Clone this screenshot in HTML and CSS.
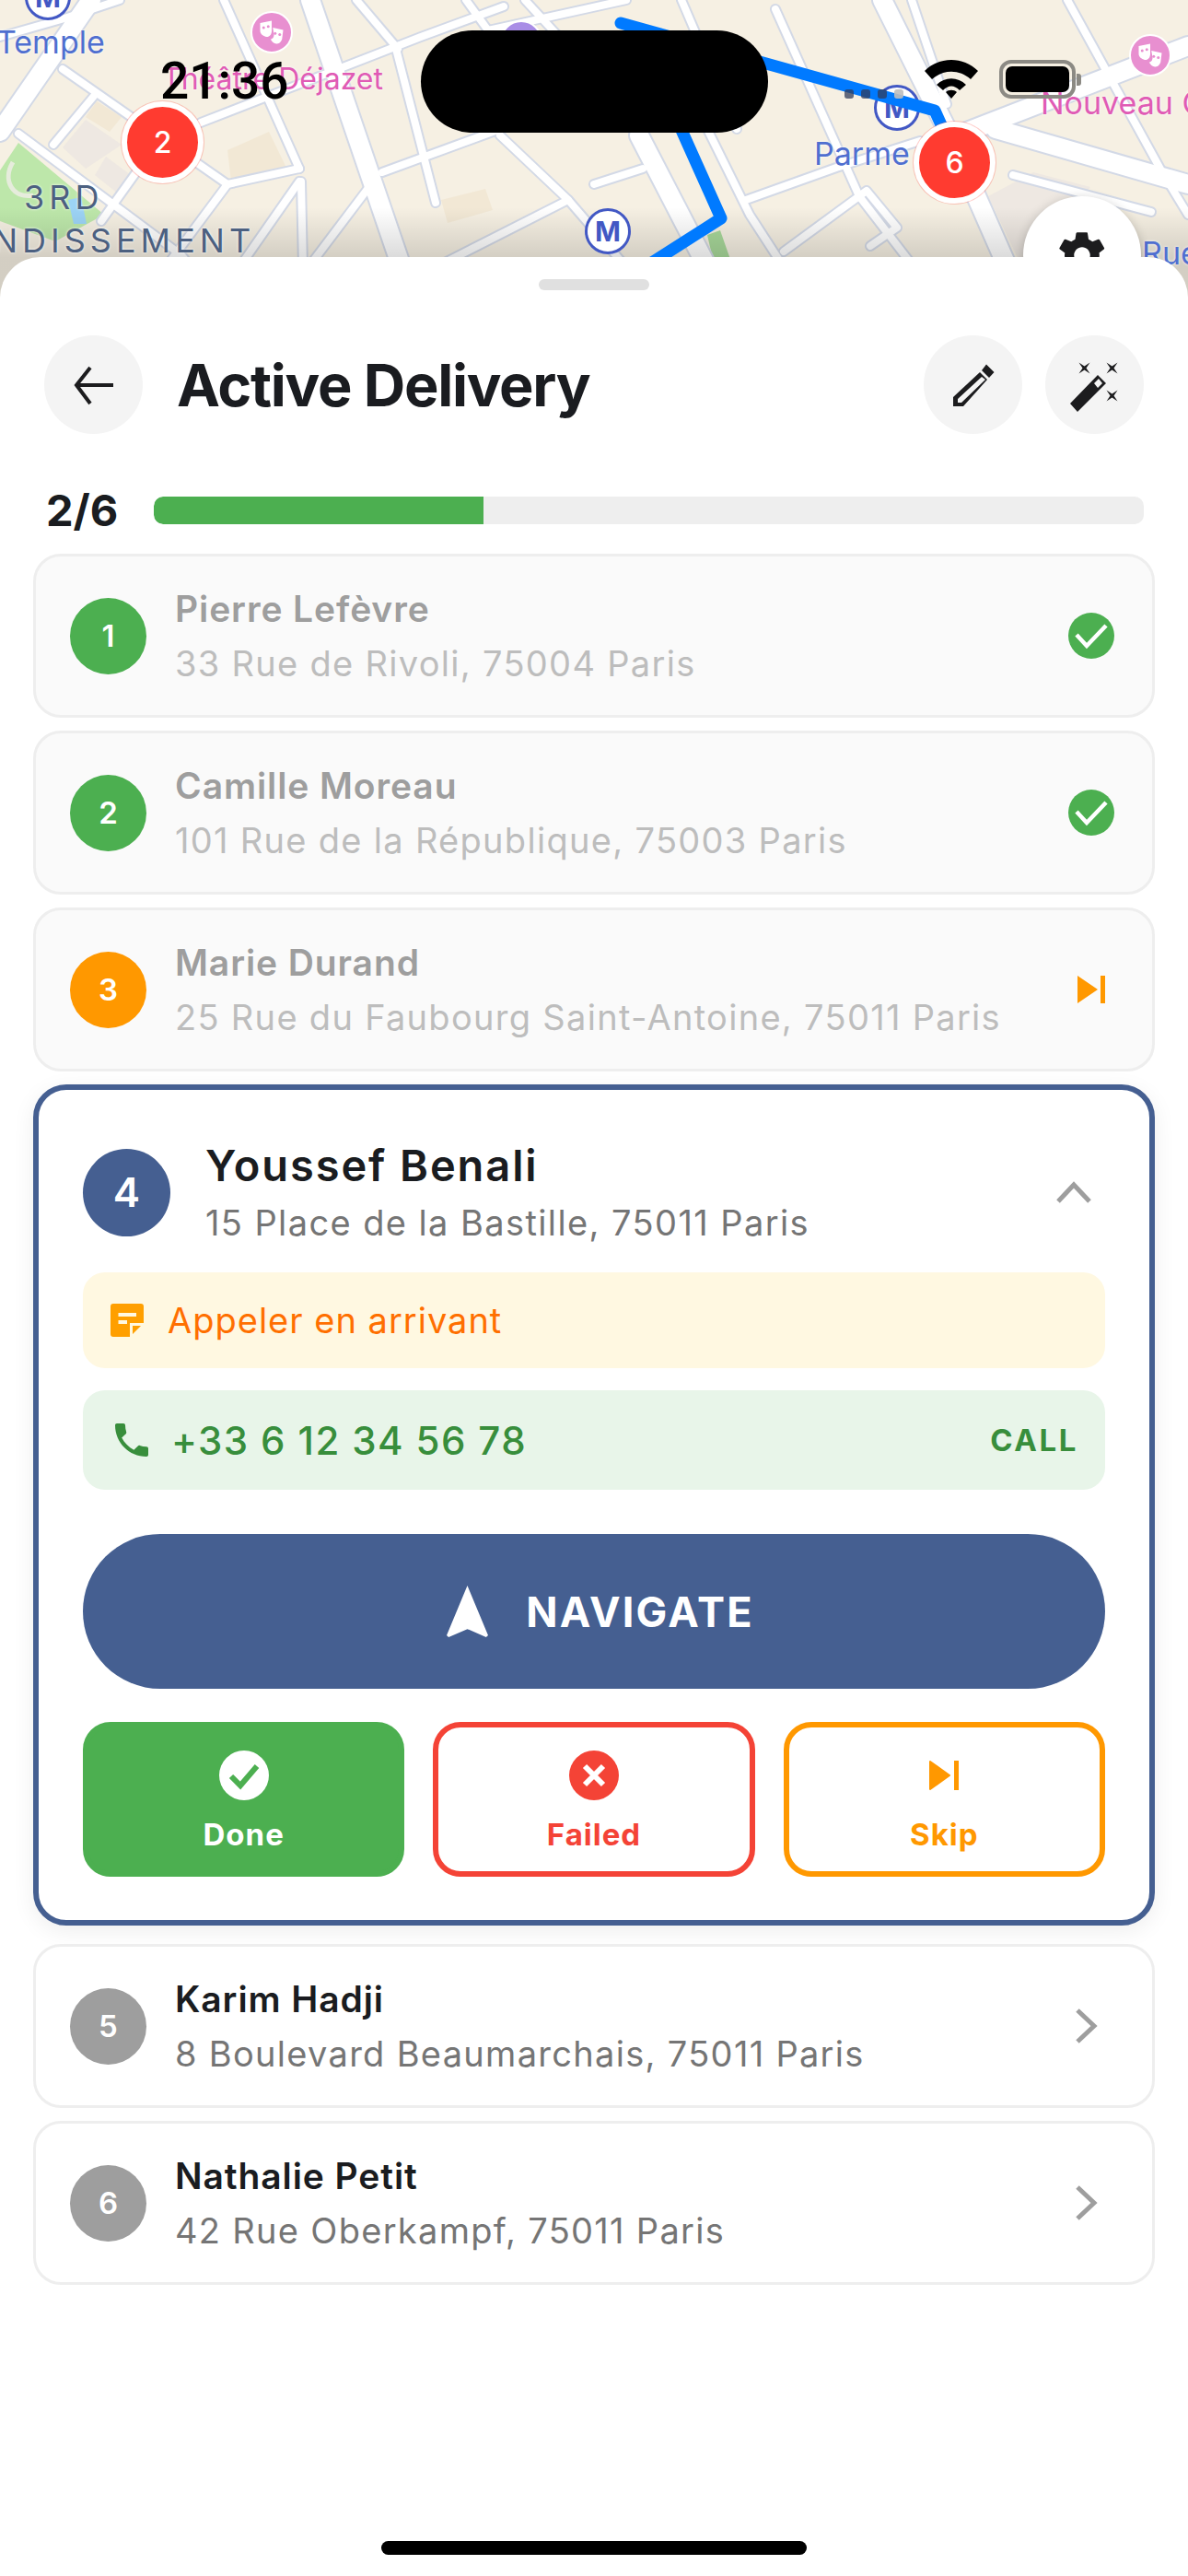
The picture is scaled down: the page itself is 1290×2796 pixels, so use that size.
FILE: index.html
```html
<!DOCTYPE html>
<html lang="en">

<head>
    <meta charset="UTF-8">
    <meta name="viewport" content="width=device-width, initial-scale=1.0">
    <title>Active Delivery</title>
    <link rel="stylesheet" href="styles.css">
</head>

<body>
    <div class="screen">
        <!-- map behind the sheet -->
        <div class="map">
            <svg class="map-art" viewBox="0 0 1290 330" width="1290" height="330">
                <defs>
                    <g id="roads-narrow">
                        <path d="M68 75L247 200" />
                        <path d="M20 145L197 277L240 330" />
                        <path d="M103 103L58 157" />
                        <path d="M148 187L110 240" />
                        <path d="M243 0L325 183" />
                        <path d="M218 133L457 40L547 7" />
                        <path d="M325 183L247 200L180 290" />
                        <path d="M325 197L260 290" />
                        <path d="M327 197L329 290" />
                        <path d="M415 187L535 143L680 90" />
                        <path d="M403 200L335 290" />
                        <path d="M430 53L473 220" />
                        <path d="M432 53L387 0" />
                        <path d="M543 147L617 217L473 290" />
                        <path d="M506 0L530 33" />
                        <path d="M530 33L680 0" />
                        <path d="M645 200L698 183" />
                        <path d="M570 0L690 130" />
                        <path d="M617 217L680 290" />
                        <path d="M768 140L814 233L851 290" />
                        <path d="M842 10L933 213L1000 300" />
                        <path d="M851 273L941 207L974 247L945 267" />
                        <path d="M810 217L908 182L999 153" />
                        <path d="M990 0L1028 113" />
                        <path d="M1159 0L1262 187L1290 233" />
                        <path d="M1100 190L1250 230" />
                        <path d="M740 0L800 140" />
                        <path d="M0 40L70 20L130 0" />
                    </g>
                    <g id="roads-wide">
                        <path d="M99 0L0 143" />
                        <path d="M337 0L436 290" />
                        <path d="M694 147L768 290" />
                        <path d="M958 0L1028 140L1094 290" />
                        <path d="M1050 143L1290 50" />
                        <path d="M1081 140L1290 200" />
                    </g>
                </defs>
                <rect width="1290" height="330" fill="#f6f0e3" />
                <g fill="#f2e8d5">
                    <path d="M93 127L105 110L132 127L119 143z" />
                    <path d="M247 163L292 143L311 182L251 197z" />
                    <path d="M479 217L527 205L535 228L486 242z" />
                </g>
                <g fill="#eee8e2">
                    <path d="M68 160L93 130L132 157L93 183z" />
                    <path d="M103 190L115 170L142 190L128 210z" />
                    <path d="M1073 213L1122 187L1184 203L1110 290z" />
                </g>
                <path d="M20 155L0 185V240L60 262L113 233z" fill="#bde7aa" />
                <path d="M14 176C2 196 14 216 36 212" fill="none" stroke="#e6ecdc" stroke-width="5" />
                <path d="M74 217L88 214L94 243H80z" fill="#9cd3f5" />
                <path d="M768 255L782 250L796 290H776z" fill="#a8d89a" />
                <use href="#roads-narrow" fill="none" stroke="#d3d9e6" stroke-width="12" stroke-linecap="round" stroke-linejoin="round" />
                <use href="#roads-wide" fill="none" stroke="#d3d9e6" stroke-width="24" stroke-linecap="round" stroke-linejoin="round" />
                <use href="#roads-narrow" fill="none" stroke="#fff" stroke-width="8" stroke-linecap="round" stroke-linejoin="round" />
                <use href="#roads-wide" fill="none" stroke="#fff" stroke-width="20" stroke-linecap="round" stroke-linejoin="round" />
            </svg>
            <div class="map-fade"></div>

            <span class="map-label label-temple">Temple</span>
            <span class="map-label label-parme">Parme</span>
            <span class="map-label label-rue">Rue</span>
            <span class="map-label label-theatre">Théâtre Déjazet</span>
            <span class="map-label label-nouveau">Nouveau C</span>
            <span class="map-label label-district one">3RD</span>
            <span class="map-label label-district two">NDISSEMENT</span>

            <span class="metro metro-a">M</span>
            <span class="metro metro-b">M</span>
            <span class="metro metro-c">M</span>
            <span class="poi poi-a">
                <svg viewBox="0 0 24 24" width="30" height="30"><path d="M2 4l10 -2v9c0 3 -2 5 -4 5s-6 -2 -6 -5zM13 8l9 2 -1 8c-1 3 -3 4 -5 4s-4 -2 -5 -4c2 0 3 -2 3 -4z" fill="#fff" /><circle cx="5" cy="8" r="1.200" fill="#e88fd0" /><circle cx="9" cy="7" r="1.200" fill="#e88fd0" /><circle cx="15" cy="13" r="1.200" fill="#e88fd0" /><circle cx="19" cy="14" r="1.200" fill="#e88fd0" /></svg>
            </span>
            <span class="poi poi-b">
                <svg viewBox="0 0 24 24" width="30" height="30"><path d="M2 4l10 -2v9c0 3 -2 5 -4 5s-6 -2 -6 -5zM13 8l9 2 -1 8c-1 3 -3 4 -5 4s-4 -2 -5 -4c2 0 3 -2 3 -4z" fill="#fff" /><circle cx="5" cy="8" r="1.200" fill="#e88fd0" /><circle cx="9" cy="7" r="1.200" fill="#e88fd0" /><circle cx="15" cy="13" r="1.200" fill="#e88fd0" /><circle cx="19" cy="14" r="1.200" fill="#e88fd0" /></svg>
            </span>
            <span class="poi poi-purple"></span>

            <svg class="map-art" viewBox="0 0 1290 330" width="1290" height="330">
                <path d="M674 25L1015 120L1024 140" fill="none" stroke="#007aff" stroke-width="13" stroke-linecap="round" stroke-linejoin="round" />
                <path d="M735 130L783 237L700 290" fill="none" stroke="#007aff" stroke-width="13" stroke-linecap="round" stroke-linejoin="round" />
            </svg>

            <span class="pin pin-a">2</span>
            <span class="pin pin-b">6</span>
            <span class="settings-btn">
                <svg viewBox="0 0 24 24" width="60" height="60"><path fill="#1c1c1e" d="M19.4 13c.1-.3.1-.7.1-1s0-.7-.1-1l2.100-1.600c.2-.2.2-.4.1-.6l-2-3.500c-.1-.2-.4-.3-.6-.2l-2.500 1c-.5-.4-1.100-.7-1.700-1l-.4-2.600c0-.2-.2-.4-.5-.4h-4c-.2 0-.4.2-.5.4l-.4 2.600c-.6.3-1.200.6-1.700 1l-2.500-1c-.2-.1-.5 0-.6.2l-2 3.500c-.1.2-.1.4.1.6L4.500 11c0 .3-.1.7-.1 1s0 .7.1 1l-2.100 1.600c-.2.2-.2.4-.1.6l2 3.500c.1.2.4.3.6.2l2.500-1c.5.4 1.100.7 1.700 1l.4 2.600c0 .2.2.4.5.4h4c.2 0 .4-.2.5-.4l.4-2.600c.6-.3 1.200-.6 1.700-1l2.500 1c.2.1.5 0 .6-.2l2-3.500c.1-.2.1-.4-.1-.6zM12 15.500c-1.900 0-3.500-1.600-3.500-3.500s1.600-3.500 3.500-3.500 3.500 1.600 3.500 3.500-1.600 3.500-3.500 3.500z" /></svg>
            </span>

            <!-- status bar -->
            <span class="status-time">21:36</span>
            <span class="island"></span>
            <span class="status-signal"><i></i><i></i><i></i><i class="off"></i></span>
            <svg class="status-wifi" viewBox="0 0 58 42" width="58" height="42"><path d="M0 12C16 -4 42 -4 58 12L50 21C38 10 20 10 8 21zM13 27C22 18 36 18 45 27L38 33C32 27 26 27 20 33zM23 35C26 32 32 32 35 35L29 42z" /></svg>
            <span class="status-battery"><span class="battery-level"></span></span>
        </div>

        <!-- bottom sheet -->
        <div class="sheet">
            <div class="grabber"></div>

            <div class="sheet-header">
                <button class="round-btn back-btn">
                    <svg viewBox="0 0 48 48" width="48" height="48"><path d="M45 24H6M20 5L5 24l15 20" fill="none" stroke="#1c1c1e" stroke-width="4" /></svg>
                </button>
                <h1>Active Delivery</h1>
                <button class="round-btn">
                    <svg viewBox="0 0 48 48" width="48" height="48"><path fill-rule="evenodd" fill="#1c1c1e" d="M38 1.500L46.500 10L41 16L33 8zM31 10L39 18L13 47H2V37zM33 15L7 39V43H11L37 18z" /></svg>
                </button>
                <button class="round-btn">
                    <svg viewBox="0 0 60 60" width="60" height="60"><path fill-rule="evenodd" fill="#1c1c1e" d="M33 19L42 28L11 59L3 50zM34 23L29 28L33 33L38 28z" /><path fill="#1c1c1e" d="M12.500 5.500l6 4 6-4-4 6 4 6-6-4-6 4 4-6zM42.500 5.500l6 4 6-4-4 6 4 6-6-4-6 4 4-6zM42.500 35.500l6 4 6-4-4 6 4 6-6-4-6 4 4-6z" /></svg>
                </button>
            </div>

            <div class="progress-row">
                <span class="progress-count">2/6</span>
                <div class="progress-track">
                    <div class="progress-fill" style="width: 33.33%"></div>
                </div>
            </div>

            <div class="stops">
                <div class="stop muted">
                    <span class="stop-num green">1</span>
                    <div class="stop-text">
                        <div class="stop-name">Pierre Lefèvre</div>
                        <div class="stop-addr">33 Rue de Rivoli, 75004 Paris</div>
                    </div>
                    <svg class="stop-icon" viewBox="0 0 60 60" width="60" height="60"><circle cx="30" cy="30" r="25" fill="#4caf50" /><path d="M14 29L25 41L46 19" fill="none" stroke="#fff" stroke-width="4.500" /></svg>
                </div>
                <div class="stop muted">
                    <span class="stop-num green">2</span>
                    <div class="stop-text">
                        <div class="stop-name">Camille Moreau</div>
                        <div class="stop-addr">101 Rue de la République, 75003 Paris</div>
                    </div>
                    <svg class="stop-icon" viewBox="0 0 60 60" width="60" height="60"><circle cx="30" cy="30" r="25" fill="#4caf50" /><path d="M14 29L25 41L46 19" fill="none" stroke="#fff" stroke-width="4.500" /></svg>
                </div>
                <div class="stop muted">
                    <span class="stop-num orange">3</span>
                    <div class="stop-text">
                        <div class="stop-name">Marie Durand</div>
                        <div class="stop-addr">25 Rue du Faubourg Saint-Antoine, 75011 Paris</div>
                    </div>
                    <svg class="stop-icon" viewBox="0 0 60 60" width="60" height="60"><path fill="#ff9800" d="M15 15L37 30L15 45zM40 15h5v30h-5z" /></svg>
                </div>

                <div class="stop-active">
                    <div class="active-head">
                        <span class="stop-num navy">4</span>
                        <div class="stop-text">
                            <div class="active-name">Youssef Benali</div>
                            <div class="active-addr">15 Place de la Bastille, 75011 Paris</div>
                        </div>
                        <svg class="chevron-up" viewBox="0 0 40 26" width="40" height="26"><path d="M3 23L20 5l17 18" fill="none" stroke="#9e9e9e" stroke-width="5" /></svg>
                    </div>

                    <div class="note">
                        <svg viewBox="0 0 36 36" width="36" height="36"><path fill="#ff9f00" d="M3 0h30a3 3 0 0 1 3 3v18H21v15H3a3 3 0 0 1-3-3V3a3 3 0 0 1 3-3zM24 33V24h9z" /><path fill="#fff8e1" d="M8.500 10H28v4H8.500zM8.500 18H18v4H8.500z" /></svg>
                        <span>Appeler en arrivant</span>
                    </div>

                    <div class="phone">
                        <svg viewBox="0 0 24 24" width="48" height="48"><path fill="#388e3c" d="M6.600 10.800c1.400 2.800 3.800 5.100 6.600 6.600l2.200-2.200c.3-.3.700-.4 1-.2 1.100.4 2.300.6 3.600.6.600 0 1 .4 1 1V20c0 .6-.4 1-1 1C10.600 21 3 13.400 3 4c0-.6.400-1 1-1h3.500c.6 0 1 .4 1 1 0 1.300.2 2.500.6 3.600.1.300 0 .7-.2 1z" /></svg>
                        <span class="phone-num">+33 6 12 34 56 78</span>
                        <span class="phone-call">CALL</span>
                    </div>

                    <button class="navigate-btn">
                        <svg viewBox="4.500 2 15 19" preserveAspectRatio="none" width="45" height="56"><path fill="#fff" d="M12 2L4.500 20.290l.71.71L12 18l6.790 3 .71-.71z" /></svg>
                        <span>NAVIGATE</span>
                    </button>

                    <div class="actions">
                        <button class="action done">
                            <svg viewBox="0 0 60 60" width="60" height="60"><circle cx="30" cy="30" r="27" fill="#fff" /><path d="M16 31l10 10 18 -21" fill="none" stroke="#4caf50" stroke-width="6" /></svg>
                            <span>Done</span>
                        </button>
                        <button class="action failed">
                            <svg viewBox="0 0 60 60" width="60" height="60"><circle cx="30" cy="30" r="27" fill="#f44336" /><path d="M20 20l20 20M40 20L20 40" fill="none" stroke="#fff" stroke-width="6" /></svg>
                            <span>Failed</span>
                        </button>
                        <button class="action skip">
                            <svg viewBox="0 0 60 60" width="60" height="60"><path fill="#ff9800" stroke="#ff9800" stroke-width="2" stroke-linejoin="round" d="M15 15L36 30L15 45z" /><path fill="#ff9800" d="M41 14h5v32h-5z" /></svg>
                            <span>Skip</span>
                        </button>
                    </div>
                </div>

                <div class="stop">
                    <span class="stop-num gray">5</span>
                    <div class="stop-text">
                        <div class="stop-name">Karim Hadji</div>
                        <div class="stop-addr">8 Boulevard Beaumarchais, 75011 Paris</div>
                    </div>
                    <svg class="stop-icon" viewBox="0 0 60 60" width="60" height="60"><path d="M15 13L33 30L15 47" fill="none" stroke="#9e9e9e" stroke-width="5" /></svg>
                </div>
                <div class="stop">
                    <span class="stop-num gray">6</span>
                    <div class="stop-text">
                        <div class="stop-name">Nathalie Petit</div>
                        <div class="stop-addr">42 Rue Oberkampf, 75011 Paris</div>
                    </div>
                    <svg class="stop-icon" viewBox="0 0 60 60" width="60" height="60"><path d="M15 13L33 30L15 47" fill="none" stroke="#9e9e9e" stroke-width="5" /></svg>
                </div>
            </div>

            <div class="home-bar"></div>
        </div>
    </div>
</body>

</html>
```

FILE: styles.css
```css
* {
    box-sizing: border-box;
}

body {
    margin: 0;
    font-family: Inter, "Liberation Sans", sans-serif;
    background-color: #fff;
    color: #1a1c20;
}

button {
    font-family: inherit;
    border: none;
    padding: 0;
}

.screen {
    width: 1290px;
    height: 2796px;
    display: flex;
    flex-direction: column;
    overflow: hidden;
}

/* map */
.map {
    position: relative;
    height: 330px;
    flex-shrink: 0;
    overflow: hidden;
}

.map-art {
    position: absolute;
    left: 0;
    top: 0;
}

.map-fade {
    position: absolute;
    left: 0;
    right: 0;
    top: 225px;
    height: 105px;
    background: linear-gradient(rgba(0, 0, 0, 0), rgba(0, 0, 0, 0.14) 52%);
}

.map-label {
    position: absolute;
    font-size: 34px;
    line-height: 40px;
    white-space: nowrap;
    color: #4f6fd0;
    text-shadow: 0 0 3px #fff;
}

.label-temple {
    left: -4px;
    top: 26px;
}

.label-parme {
    left: 884px;
    top: 147px;
}

.label-rue {
    left: 1240px;
    top: 255px;
}

.label-theatre {
    left: 176px;
    top: 66px;
    color: #e05bb5;
    font-size: 32px;
}

.label-nouveau {
    left: 1130px;
    top: 92px;
    color: #e05bb5;
}

.label-district {
    color: #4c6080;
    font-size: 36px;
    letter-spacing: 5px;
}

.label-district.one {
    left: 26px;
    top: 194px;
}

.label-district.two {
    left: -8px;
    top: 241px;
}

.metro {
    position: absolute;
    width: 50px;
    height: 50px;
    border: 3px solid #4258c4;
    border-radius: 50%;
    background-color: #fff;
    color: #4258c4;
    font-size: 30px;
    font-weight: 700;
    line-height: 44px;
    text-align: center;
}

.metro-a {
    left: 27px;
    top: -28px;
}

.metro-b {
    left: 635px;
    top: 226px;
}

.metro-c {
    left: 949px;
    top: 92px;
}

.poi {
    position: absolute;
    display: flex;
    align-items: center;
    justify-content: center;
    width: 46px;
    height: 46px;
    border: 2px solid #fff;
    border-radius: 50%;
    background-color: #e88fd0;
}

.poi-a {
    left: 272px;
    top: 12px;
}

.poi-b {
    left: 1226px;
    top: 37px;
}

.poi-purple {
    left: 543px;
    top: 22px;
    background-color: #a98de6;
}

.pin {
    position: absolute;
    width: 89px;
    height: 89px;
    border: 6px solid #fff;
    border-radius: 50%;
    background-color: #ff3b30;
    box-shadow: 0 0 0 1px rgba(255, 59, 48, 0.25);
    color: #fff;
    font-size: 32px;
    font-weight: 500;
    line-height: 77px;
    text-align: center;
}

.pin-a {
    left: 132px;
    top: 110px;
}

.pin-b {
    left: 992px;
    top: 132px;
}

.settings-btn {
    position: absolute;
    left: 1111px;
    top: 213px;
    width: 128px;
    height: 128px;
    display: flex;
    align-items: center;
    justify-content: center;
    border-radius: 50%;
    background-color: #fff;
    box-shadow: 0 2px 12px rgba(0, 0, 0, 0.2);
}

.status-time {
    position: absolute;
    left: 174px;
    top: 58px;
    color: #000;
    font-family: Roboto, "Liberation Sans", sans-serif;
    font-size: 55px;
    font-weight: 500;
    line-height: 60px;
}

.island {
    position: absolute;
    left: 457px;
    top: 33px;
    width: 377px;
    height: 111px;
    border-radius: 56px;
    background-color: #000;
}

.status-signal {
    position: absolute;
    left: 917px;
    top: 97px;
    display: flex;
    gap: 8px;
}

.status-signal i {
    width: 10px;
    height: 10px;
    border-radius: 3px;
    background-color: rgba(50, 60, 90, 0.75);
}

.status-signal i.off {
    background-color: rgba(190, 190, 190, 0.9);
}

.status-wifi {
    position: absolute;
    left: 1004px;
    top: 65px;
}

.status-battery {
    position: absolute;
    left: 1085px;
    top: 65px;
    width: 83px;
    height: 42px;
    padding: 3px;
    border: 4px solid #8c8a84;
    border-radius: 13px;
}

.status-battery::after {
    content: "";
    position: absolute;
    right: -10px;
    top: 11px;
    width: 5px;
    height: 13px;
    border-radius: 0 3px 3px 0;
    background-color: #8c8a84;
}

.battery-level {
    display: block;
    width: 100%;
    height: 100%;
    border-radius: 7px;
    background-color: #000;
}

/* bottom sheet */
.sheet {
    position: relative;
    flex: 1;
    margin-top: -51px;
    border-radius: 44px 44px 0 0;
    background-color: #fff;
    padding: 24px 36px 0;
}

.grabber {
    width: 120px;
    height: 12px;
    margin: 0 auto;
    border-radius: 6px;
    background-color: #e0e0e0;
}

.sheet-header {
    display: flex;
    align-items: center;
    gap: 25px;
    margin: 49px 12px 0;
}

.sheet-header h1 {
    flex: 1;
    margin: 0 0 0 12px;
    font-size: 63px;
    font-weight: 700;
    letter-spacing: -1.3px;
    line-height: 72px;
}

.round-btn {
    display: flex;
    align-items: center;
    justify-content: center;
    width: 107px;
    height: 107px;
    border-radius: 50%;
    background-color: #f4f4f4;
}

.progress-row {
    display: flex;
    align-items: center;
    gap: 40px;
    height: 40px;
    margin: 63px 12px 0 14px;
}

.progress-count {
    width: 77px;
    font-size: 47px;
    font-weight: 700;
    line-height: 40px;
    white-space: nowrap;
}

.progress-track {
    flex: 1;
    height: 30px;
    border-radius: 10px;
    overflow: hidden;
    background-color: #eee;
}

.progress-fill {
    height: 100%;
    border-radius: 10px 0 0 10px;
    background-color: #4caf50;
}

.stops {
    display: flex;
    flex-direction: column;
    gap: 14px;
    margin-top: 27px;
}

.stop {
    display: flex;
    align-items: center;
    height: 178px;
    padding: 0 37px;
    border: 3px solid #eee;
    border-radius: 30px;
    background-color: #fff;
}

.stop.muted {
    background-color: #fafafa;
}

.stop-num {
    flex-shrink: 0;
    display: flex;
    align-items: center;
    justify-content: center;
    width: 83px;
    height: 83px;
    border-radius: 50%;
    color: #fff;
    font-size: 33px;
    font-weight: 600;
}

.stop-num.green {
    background-color: #4caf50;
}

.stop-num.orange {
    background-color: #ff9800;
}

.stop-num.gray {
    background-color: #9e9e9e;
}

.stop-num.navy {
    width: 95px;
    height: 95px;
    background-color: #455f91;
    font-size: 44px;
}

.stop-text {
    flex: 1;
    min-width: 0;
    margin-left: 31px;
}

.stop-name {
    font-size: 39px;
    font-weight: 600;
    line-height: 46px;
    letter-spacing: 0.9px;
}

.stop-addr {
    margin-top: 13px;
    color: #757575;
    font-size: 38px;
    line-height: 46px;
    letter-spacing: 1.3px;
    white-space: nowrap;
}

.muted .stop-name {
    color: #9e9e9e;
}

.muted .stop-addr {
    color: #bdbdbd;
}

.stop-icon {
    flex-shrink: 0;
    margin-right: -1px;
}

/* expanded stop */
.stop-active {
    display: flex;
    flex-direction: column;
    margin-bottom: 6px;
    padding: 56px 48px 47px;
    border: 6px solid #455f91;
    border-radius: 36px;
    background-color: #fff;
    box-shadow: 0 6px 24px rgba(0, 0, 0, 0.07);
}

.active-head {
    display: flex;
    align-items: center;
}

.active-head .stop-text {
    margin-left: 38px;
}

.active-name {
    font-size: 47px;
    font-weight: 600;
    line-height: 52px;
    letter-spacing: 1.9px;
}

.active-addr {
    margin-top: 14px;
    color: #757575;
    font-size: 38px;
    line-height: 44px;
    letter-spacing: 1.4px;
    white-space: nowrap;
}

.chevron-up {
    margin-right: 14px;
}

.note {
    display: flex;
    align-items: center;
    gap: 26px;
    height: 104px;
    margin-top: 32px;
    padding: 0 30px;
    border-radius: 24px;
    background-color: #fff8e1;
    color: #ff6f00;
    font-size: 38px;
    letter-spacing: 1px;
}

.phone {
    display: flex;
    align-items: center;
    height: 108px;
    margin-top: 24px;
    padding: 0 29px;
    border-radius: 24px;
    background-color: #e8f5e9;
    color: #388e3c;
}

.phone-num {
    flex: 1;
    margin-left: 19px;
    font-size: 42px;
    font-weight: 500;
    letter-spacing: 1.4px;
}

.phone-call {
    font-size: 33px;
    font-weight: 700;
    letter-spacing: 2.6px;
}

.navigate-btn {
    display: flex;
    align-items: center;
    justify-content: center;
    gap: 41px;
    width: 100%;
    height: 168px;
    margin-top: 48px;
    padding-left: 14px;
    border-radius: 84px;
    background-color: #455f91;
    color: #fff;
    font-size: 45px;
    font-weight: 700;
    letter-spacing: 2.2px;
}

.actions {
    display: grid;
    grid-template-columns: 1fr 1fr 1fr;
    gap: 31px;
    margin-top: 36px;
}

.action {
    display: flex;
    flex-direction: column;
    align-items: center;
    justify-content: center;
    gap: 16px;
    height: 168px;
    border: 6px solid;
    border-radius: 30px;
    background-color: #fff;
    font-size: 33px;
    font-weight: 700;
    line-height: 36px;
    letter-spacing: 1px;
}

.action.done {
    border-color: #4caf50;
    background-color: #4caf50;
    color: #fff;
}

.action.failed {
    border-color: #f44336;
    color: #f44336;
}

.action.skip {
    border-color: #ff9800;
    color: #ff9800;
}

.home-bar {
    position: absolute;
    left: 414px;
    bottom: 23px;
    width: 462px;
    height: 15px;
    border-radius: 8px;
    background-color: #000;
}
```
